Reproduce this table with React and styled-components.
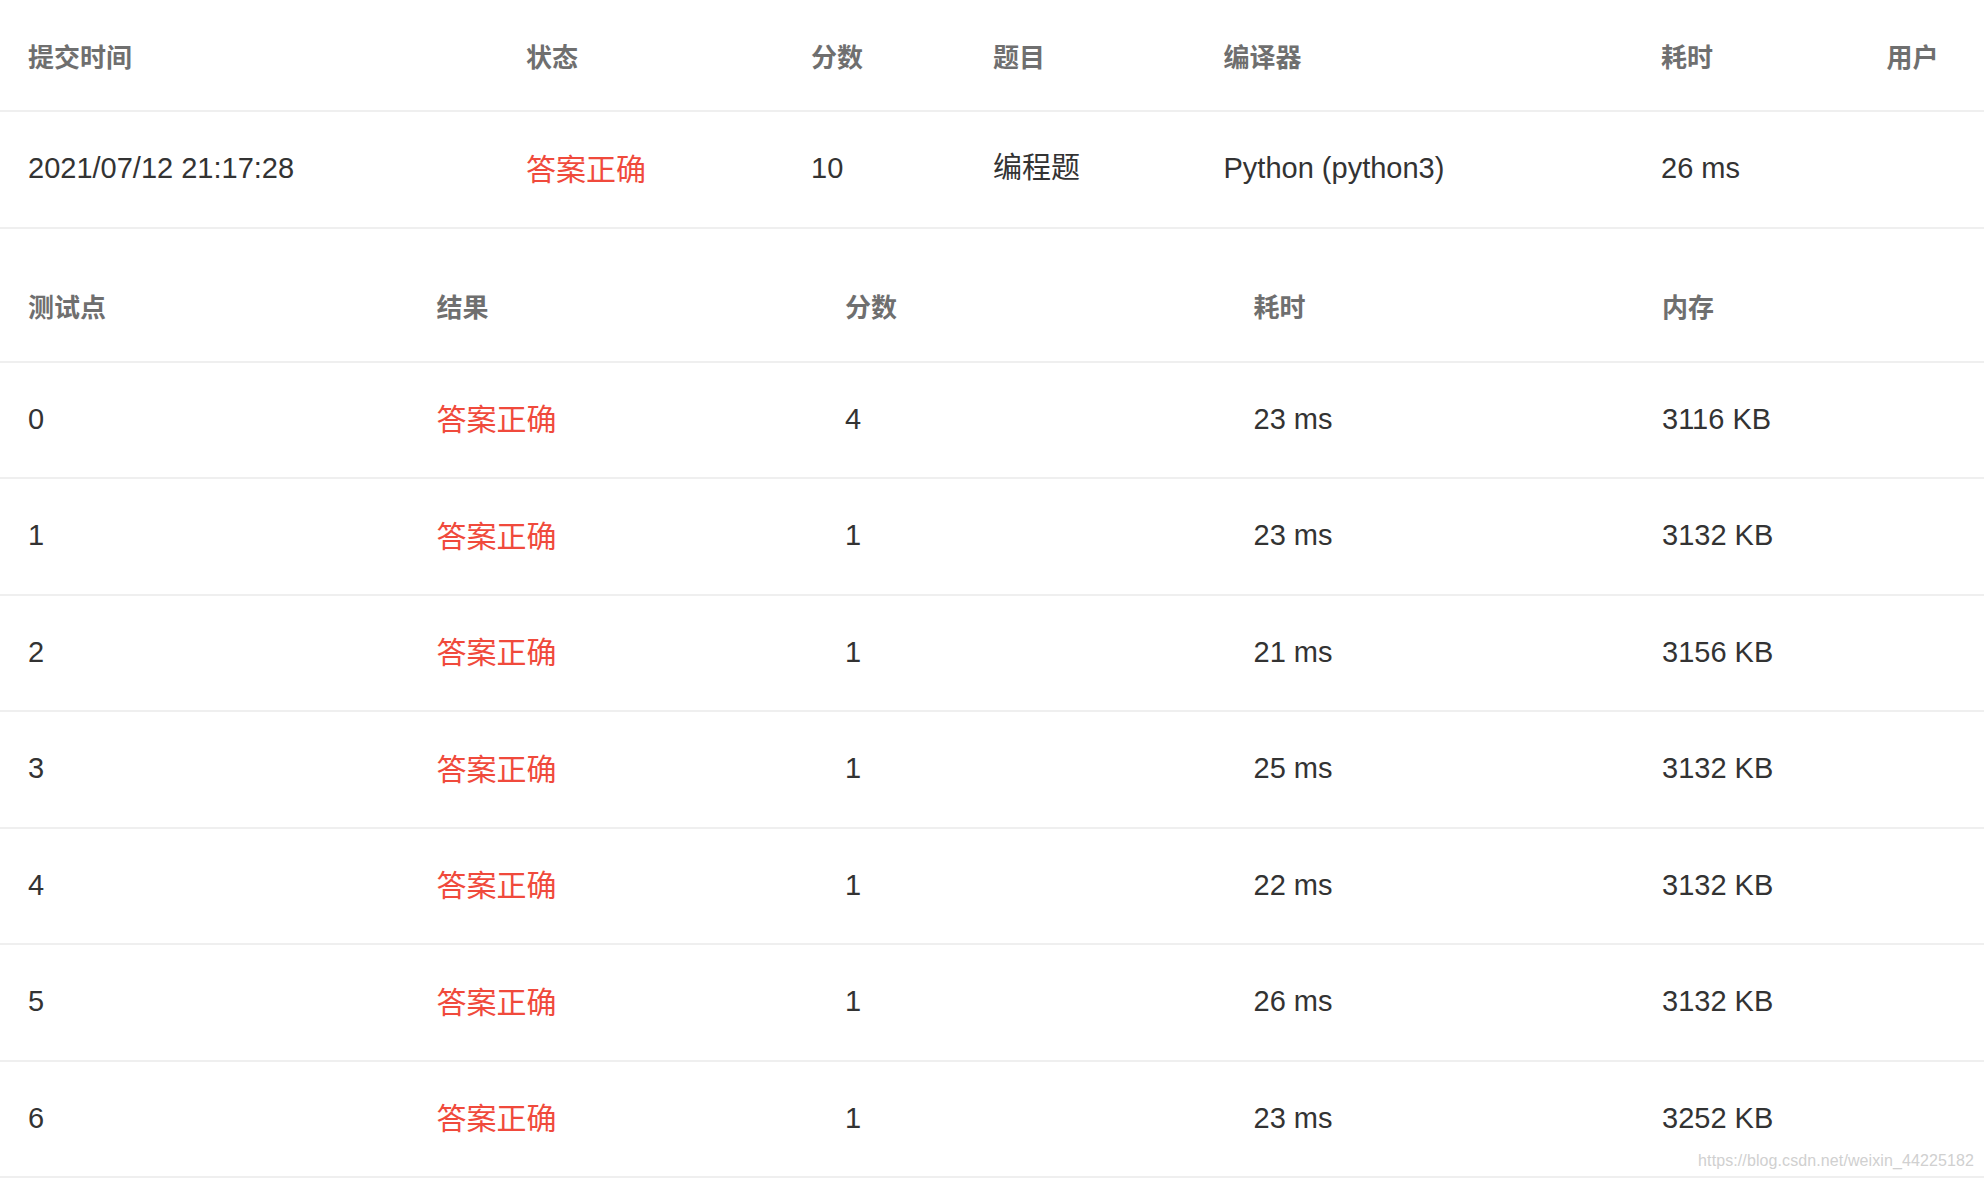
import React from "react"
import styled, { createGlobalStyle } from "styled-components"

const GlobalStyle = createGlobalStyle`
  html, body {
    margin: 0;
    padding: 0;
    background: #fff;
  }
  body {
    font-family: "Liberation Sans", "Noto Sans CJK SC", sans-serif;
    -webkit-font-smoothing: antialiased;
  }
`

const Page = styled.div`
  position: relative;
  width: 1984px;
  height: 1180px;
  overflow: hidden;
  background: #fff;
`

const Table = styled.div`
  display: flex;
  flex-direction: column;
  margin-top: ${props => props.$gap || 0}px;
`

const Row = styled.div`
  display: grid;
  grid-template-columns: ${props => props.$cols};
  align-items: center;
  height: ${props => (props.$head ? 110 : 114.5)}px;
  border-bottom: 2px solid #efefef;
`

const HeadCell = styled.div`
  padding-left: 28px;
  font-size: 26px;
  font-weight: 600;
  color: #6f6f6f;
  white-space: nowrap;
`

const Cell = styled.div`
  padding-left: 28px;
  font-size: ${props => (props.$ok ? 30 : 29)}px;
  line-height: 1.3;
  color: ${props => (props.$ok ? "#f04a3c" : "#333")};
  white-space: nowrap;
`

const Watermark = styled.div`
  position: absolute;
  right: 10px;
  bottom: 10px;
  font-family: "Liberation Sans", sans-serif;
  font-size: 16px;
  color: #d0d0d0;
  letter-spacing: 0.1px;
`

const submitCols = "498px 285px 182px 230.5px 437.5px 225.5px 1fr"
const caseCols = "408.5px 408.5px 408.5px 408.5px 1fr"

const submitHead = ["提交时间", "状态", "分数", "题目", "编译器", "耗时", "用户"]

const caseHead = ["测试点", "结果", "分数", "耗时", "内存"]

const cases = [
  { id: 0, score: 4, time: "23 ms", mem: "3116 KB" },
  { id: 1, score: 1, time: "23 ms", mem: "3132 KB" },
  { id: 2, score: 1, time: "21 ms", mem: "3156 KB" },
  { id: 3, score: 1, time: "25 ms", mem: "3132 KB" },
  { id: 4, score: 1, time: "22 ms", mem: "3132 KB" },
  { id: 5, score: 1, time: "26 ms", mem: "3132 KB" },
  { id: 6, score: 1, time: "23 ms", mem: "3252 KB" },
]

const App = () => {
  return (
    <Page>
      <GlobalStyle />
      <Table>
        <Row $head $cols={submitCols}>
          {submitHead.map(h => <HeadCell key={h}>{h}</HeadCell>)}
        </Row>
        <Row $cols={submitCols}>
          <Cell>2021/07/12 21:17:28</Cell>
          <Cell $ok>答案正确</Cell>
          <Cell>10</Cell>
          <Cell>编程题</Cell>
          <Cell>Python (python3)</Cell>
          <Cell>26 ms</Cell>
          <Cell />
        </Row>
      </Table>

      <Table $gap={22}>
        <Row $head $cols={caseCols}>
          {caseHead.map(h => <HeadCell key={h}>{h}</HeadCell>)}
        </Row>
        {cases.map(c => (
          <Row key={c.id} $cols={caseCols}>
            <Cell>{c.id}</Cell>
            <Cell $ok>答案正确</Cell>
            <Cell>{c.score}</Cell>
            <Cell>{c.time}</Cell>
            <Cell>{c.mem}</Cell>
          </Row>
        ))}
      </Table>

      <Watermark>https://blog.csdn.net/weixin_44225182</Watermark>
    </Page>
  )
}

export default App
